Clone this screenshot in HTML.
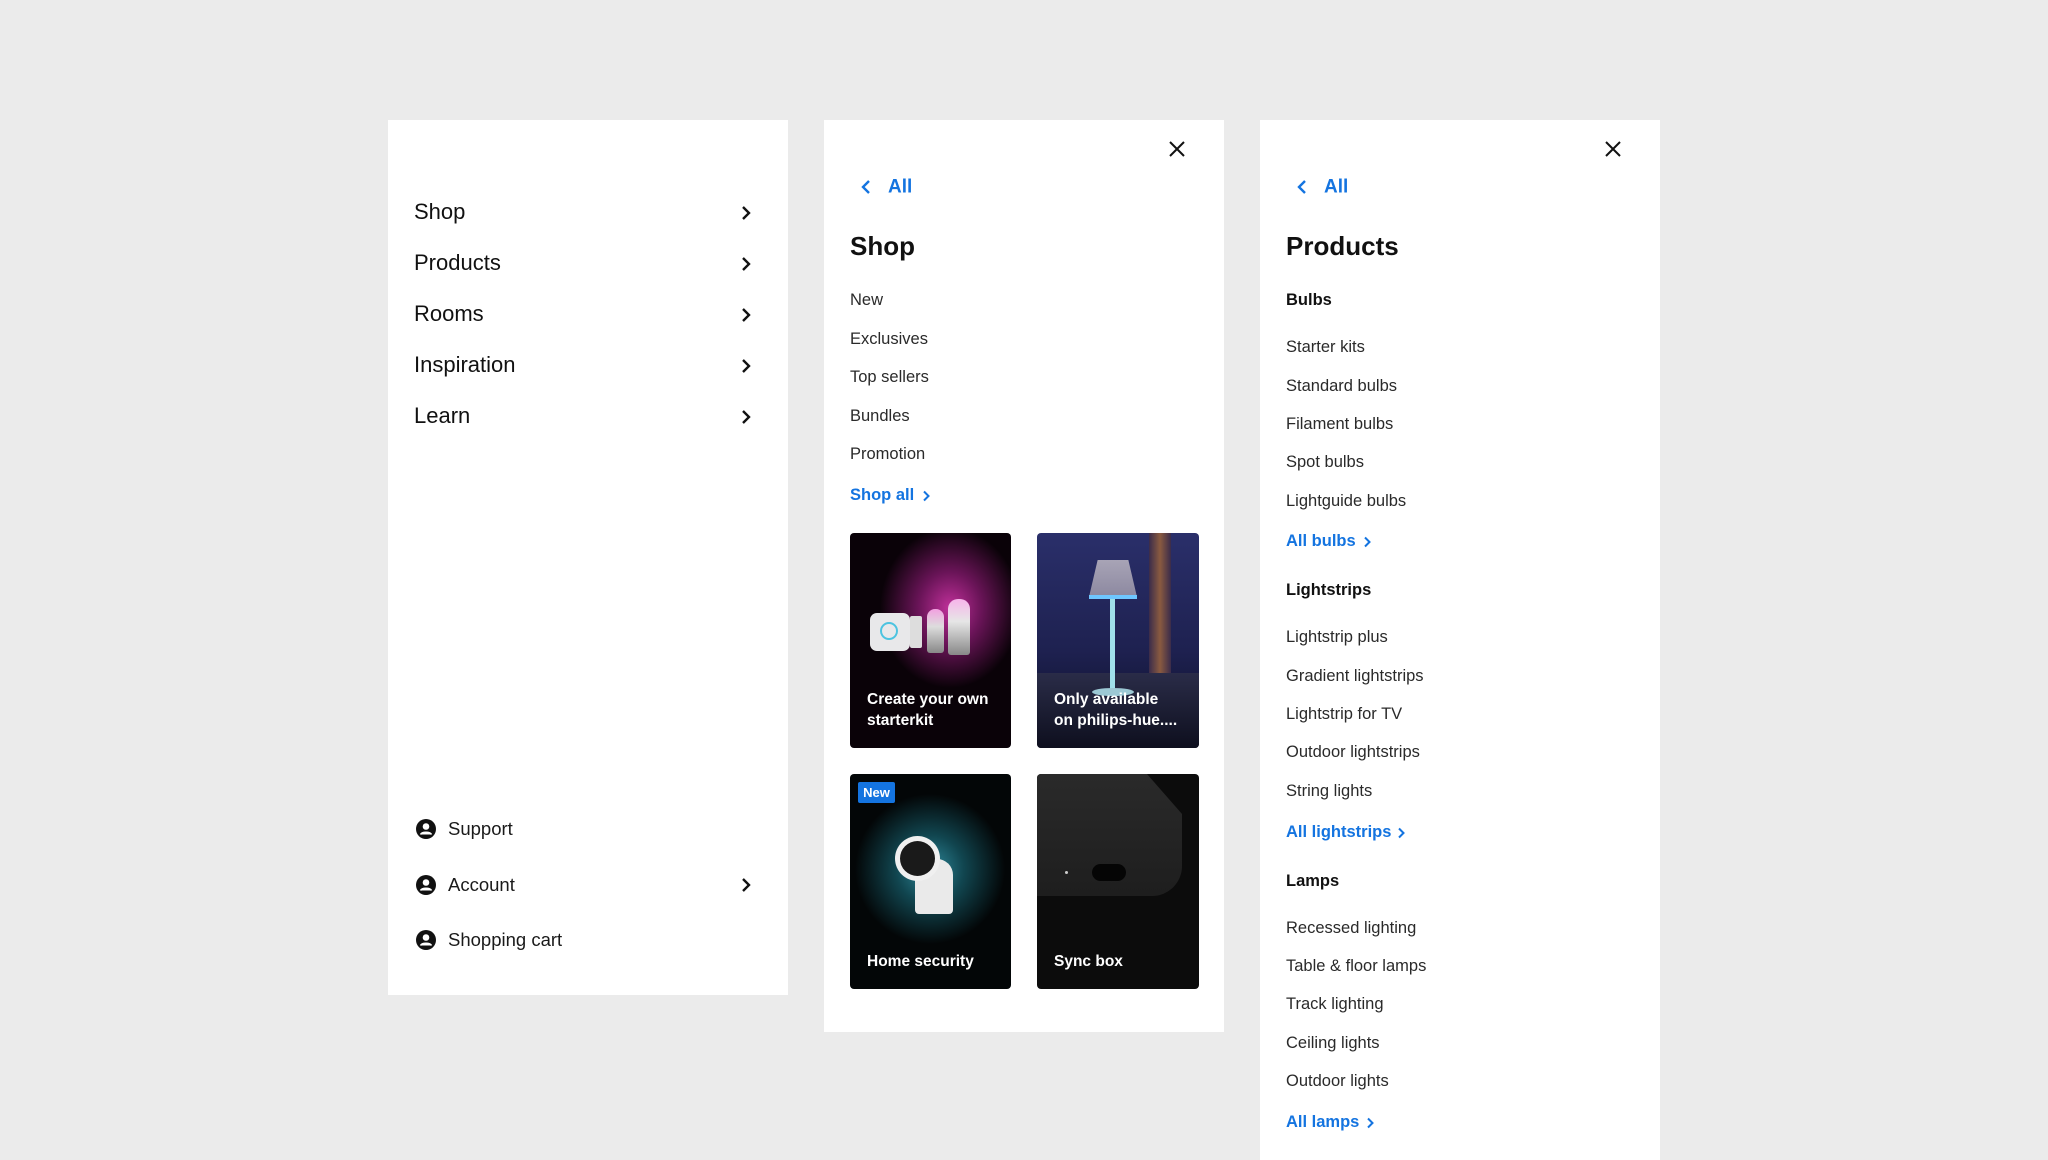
<!DOCTYPE html>
<html><head><meta charset="utf-8"><style>
*{margin:0;padding:0;box-sizing:border-box}
body{width:2048px;height:1152px;background:#ebebeb;position:relative;overflow:hidden;font-family:"Liberation Sans",sans-serif;color:#1a1a1a}
.p{position:absolute;background:#fff}
.t{position:absolute;white-space:nowrap;line-height:1;transform:translateY(-50%)}
.m{font-size:22px;left:414px;color:#111}
.s{font-size:16.5px;color:#2a2a2a}
.b{font-weight:bold;color:#111}
.bl{color:#1474e0;font-weight:bold}
.h{font-size:26px;font-weight:bold;color:#111}
svg{position:absolute;overflow:visible}
.card{position:absolute;border-radius:4px;overflow:hidden;background:#050505}
.card .ct{position:absolute;left:17px;color:#fff;font-weight:bold;font-size:15.5px;line-height:21px}
</style></head><body>

<div class="p" style="left:388px;top:120px;width:400px;height:875px"></div>
<div class="p" style="left:824px;top:120px;width:400px;height:912px"></div>
<div class="p" style="left:1260px;top:120px;width:400px;height:1040px"></div>

<!-- Panel 1 -->
<div class="t m" style="top:212px">Shop</div>
<div class="t m" style="top:263px">Products</div>
<div class="t m" style="top:314px">Rooms</div>
<div class="t m" style="top:365px">Inspiration</div>
<div class="t m" style="top:416px">Learn</div>
<svg width="10" height="16" style="left:741px;top:205px"><path d="M2 2l6 6-6 6" fill="none" stroke="#111" stroke-width="2.4"/></svg>
<svg width="10" height="16" style="left:741px;top:256px"><path d="M2 2l6 6-6 6" fill="none" stroke="#111" stroke-width="2.4"/></svg>
<svg width="10" height="16" style="left:741px;top:307px"><path d="M2 2l6 6-6 6" fill="none" stroke="#111" stroke-width="2.4"/></svg>
<svg width="10" height="16" style="left:741px;top:358px"><path d="M2 2l6 6-6 6" fill="none" stroke="#111" stroke-width="2.4"/></svg>
<svg width="10" height="16" style="left:741px;top:409px"><path d="M2 2l6 6-6 6" fill="none" stroke="#111" stroke-width="2.4"/></svg>

<svg width="20" height="20" style="left:416px;top:819px"><circle cx="10" cy="10" r="10" fill="#111"/><circle cx="10" cy="7.5" r="3.3" fill="#fff"/><path d="M4.5 15.5c1.5-3 9.5-3 11 0" fill="#fff" stroke="#fff" stroke-width="1.5"/></svg>
<svg width="20" height="20" style="left:416px;top:875px"><circle cx="10" cy="10" r="10" fill="#111"/><circle cx="10" cy="7.5" r="3.3" fill="#fff"/><path d="M4.5 15.5c1.5-3 9.5-3 11 0" fill="#fff" stroke="#fff" stroke-width="1.5"/></svg>
<svg width="20" height="20" style="left:416px;top:930px"><circle cx="10" cy="10" r="10" fill="#111"/><circle cx="10" cy="7.5" r="3.3" fill="#fff"/><path d="M4.5 15.5c1.5-3 9.5-3 11 0" fill="#fff" stroke="#fff" stroke-width="1.5"/></svg>
<div class="t" style="left:448px;top:829px;font-size:18.5px">Support</div>
<div class="t" style="left:448px;top:885px;font-size:18.5px">Account</div>
<div class="t" style="left:448px;top:940px;font-size:18.5px">Shopping cart</div>
<svg width="10" height="16" style="left:741px;top:877px"><path d="M2 2l6 6-6 6" fill="none" stroke="#111" stroke-width="2.4"/></svg>

<!-- Panel 2 -->
<svg width="16" height="16" style="left:1169px;top:141px"><path d="M1 1l14 14M15 1L1 15" stroke="#111" stroke-width="2"/></svg>
<svg width="10" height="16" style="left:861px;top:179px"><path d="M8 2l-6 6 6 6" fill="none" stroke="#1474e0" stroke-width="2.4"/></svg>
<div class="t bl" style="left:888px;top:187px;font-size:19px">All</div>
<div class="t h" style="left:850px;top:246px">Shop</div>
<div class="t s" style="left:850px;top:300px">New</div>
<div class="t s" style="left:850px;top:339px">Exclusives</div>
<div class="t s" style="left:850px;top:377px">Top sellers</div>
<div class="t s" style="left:850px;top:416px">Bundles</div>
<div class="t s" style="left:850px;top:454px">Promotion</div>
<div class="t s bl" style="left:850px;top:495px">Shop all</div>
<svg width="8" height="12" style="left:922px;top:490px"><path d="M2 1.5l4.5 4.5-4.5 4.5" fill="none" stroke="#1474e0" stroke-width="2"/></svg>

<div class="card" style="left:850px;top:533px;width:161px;height:215px;background:radial-gradient(ellipse 70px 80px at 100px 75px,#c0309a 0%,#6a1458 45%,#0a0208 100%)">
  <div style="position:absolute;left:20px;top:80px;width:40px;height:38px;border-radius:7px;background:#e8e8ea"></div>
  <div style="position:absolute;left:30px;top:89px;width:18px;height:18px;border-radius:50%;border:2px solid #4cc3e0"></div>
  <div style="position:absolute;left:60px;top:83px;width:12px;height:32px;background:#ddd;border-radius:2px"></div>
  <div style="position:absolute;left:77px;top:76px;width:17px;height:44px;background:linear-gradient(#f2a0e0,#ddd 40%,#888);border-radius:8px 8px 3px 3px"></div>
  <div style="position:absolute;left:98px;top:66px;width:22px;height:56px;background:linear-gradient(#f7b4ea,#e6e6e6 40%,#888);border-radius:10px 10px 3px 3px"></div>
  <div class="ct" style="top:156px">Create your own<br>starterkit</div>
</div>
<div class="card" style="left:1037px;top:533px;width:162px;height:215px;background:linear-gradient(180deg,#2a2f6a 0%,#1e2150 55%,#0a0c22 100%)">
  <div style="position:absolute;left:112px;top:0;width:22px;height:140px;background:linear-gradient(90deg,#3a2c4a,#8a5a40,#3a2c4a)"></div>
  <div style="position:absolute;left:0;top:140px;width:162px;height:75px;background:linear-gradient(#2a2c48,#0e0f1e)"></div>
  <div style="position:absolute;left:52px;top:27px;width:48px;height:37px;background:linear-gradient(#a8a4b6,#8c88a0);clip-path:polygon(18% 0,82% 0,100% 100%,0 100%)"></div>
  <div style="position:absolute;left:52px;top:62px;width:48px;height:4px;background:#6ec6ff"></div>
  <div style="position:absolute;left:73px;top:66px;width:5px;height:92px;background:#a0e0ea"></div>
  <div style="position:absolute;left:55px;top:155px;width:42px;height:8px;border-radius:50%;background:#9cc8d4"></div>
  <div class="ct" style="top:156px">Only available<br>on philips-hue....</div>
</div>
<div class="card" style="left:850px;top:774px;width:161px;height:215px;background:radial-gradient(ellipse 75px 75px at 80px 95px,#2f8a9c 0%,#114650 45%,#030607 100%)">
  <div style="position:absolute;left:8px;top:8px;width:37px;height:21px;background:#1474e0;border-radius:2px;color:#fff;font-weight:bold;font-size:13px;line-height:21px;text-align:center">New</div>
  <div style="position:absolute;left:65px;top:85px;width:38px;height:55px;background:#eaeaea;border-radius:16px 16px 4px 4px"></div>
  <div style="position:absolute;left:45px;top:62px;width:45px;height:45px;border-radius:50%;background:#f0f0f0"></div>
  <div style="position:absolute;left:50px;top:67px;width:35px;height:35px;border-radius:50%;background:#1a1a1a"></div>
  <div class="ct" style="top:177px">Home security</div>
</div>
<div class="card" style="left:1037px;top:774px;width:162px;height:215px;background:#0c0c0c">
  <div style="position:absolute;left:0;top:0;width:145px;height:122px;background:linear-gradient(#2a2a2a,#1e1e1e);border-radius:0 0 30px 0;clip-path:polygon(0 0,110px 0,145px 40px,145px 122px,0 122px)"></div>
  <div style="position:absolute;left:55px;top:90px;width:34px;height:17px;border-radius:9px;background:#050505"></div>
  <div style="position:absolute;left:28px;top:97px;width:3px;height:3px;border-radius:50%;background:#ccc"></div>
  <div class="ct" style="top:177px">Sync box</div>
</div>

<!-- Panel 3 -->
<svg width="16" height="16" style="left:1605px;top:141px"><path d="M1 1l14 14M15 1L1 15" stroke="#111" stroke-width="2"/></svg>
<svg width="10" height="16" style="left:1297px;top:179px"><path d="M8 2l-6 6 6 6" fill="none" stroke="#1474e0" stroke-width="2.4"/></svg>
<div class="t bl" style="left:1324px;top:187px;font-size:19px">All</div>
<div class="t h" style="left:1286px;top:246px">Products</div>
<div class="t s b" style="left:1286px;top:300px">Bulbs</div>
<div class="t s" style="left:1286px;top:347px">Starter kits</div>
<div class="t s" style="left:1286px;top:386px">Standard bulbs</div>
<div class="t s" style="left:1286px;top:424px">Filament bulbs</div>
<div class="t s" style="left:1286px;top:462px">Spot bulbs</div>
<div class="t s" style="left:1286px;top:501px">Lightguide bulbs</div>
<div class="t s bl" style="left:1286px;top:541px">All bulbs</div>
<svg width="8" height="12" style="left:1363px;top:536px"><path d="M2 1.5l4.5 4.5-4.5 4.5" fill="none" stroke="#1474e0" stroke-width="2"/></svg>
<div class="t s b" style="left:1286px;top:590px">Lightstrips</div>
<div class="t s" style="left:1286px;top:637px">Lightstrip plus</div>
<div class="t s" style="left:1286px;top:676px">Gradient lightstrips</div>
<div class="t s" style="left:1286px;top:714px">Lightstrip for TV</div>
<div class="t s" style="left:1286px;top:752px">Outdoor lightstrips</div>
<div class="t s" style="left:1286px;top:791px">String lights</div>
<div class="t s bl" style="left:1286px;top:832px">All lightstrips</div>
<svg width="8" height="12" style="left:1397px;top:827px"><path d="M2 1.5l4.5 4.5-4.5 4.5" fill="none" stroke="#1474e0" stroke-width="2"/></svg>
<div class="t s b" style="left:1286px;top:881px">Lamps</div>
<div class="t s" style="left:1286px;top:928px">Recessed lighting</div>
<div class="t s" style="left:1286px;top:966px">Table &amp; floor lamps</div>
<div class="t s" style="left:1286px;top:1004px">Track lighting</div>
<div class="t s" style="left:1286px;top:1043px">Ceiling lights</div>
<div class="t s" style="left:1286px;top:1081px">Outdoor lights</div>
<div class="t s bl" style="left:1286px;top:1122px">All lamps</div>
<svg width="8" height="12" style="left:1366px;top:1117px"><path d="M2 1.5l4.5 4.5-4.5 4.5" fill="none" stroke="#1474e0" stroke-width="2"/></svg>
</body></html>
